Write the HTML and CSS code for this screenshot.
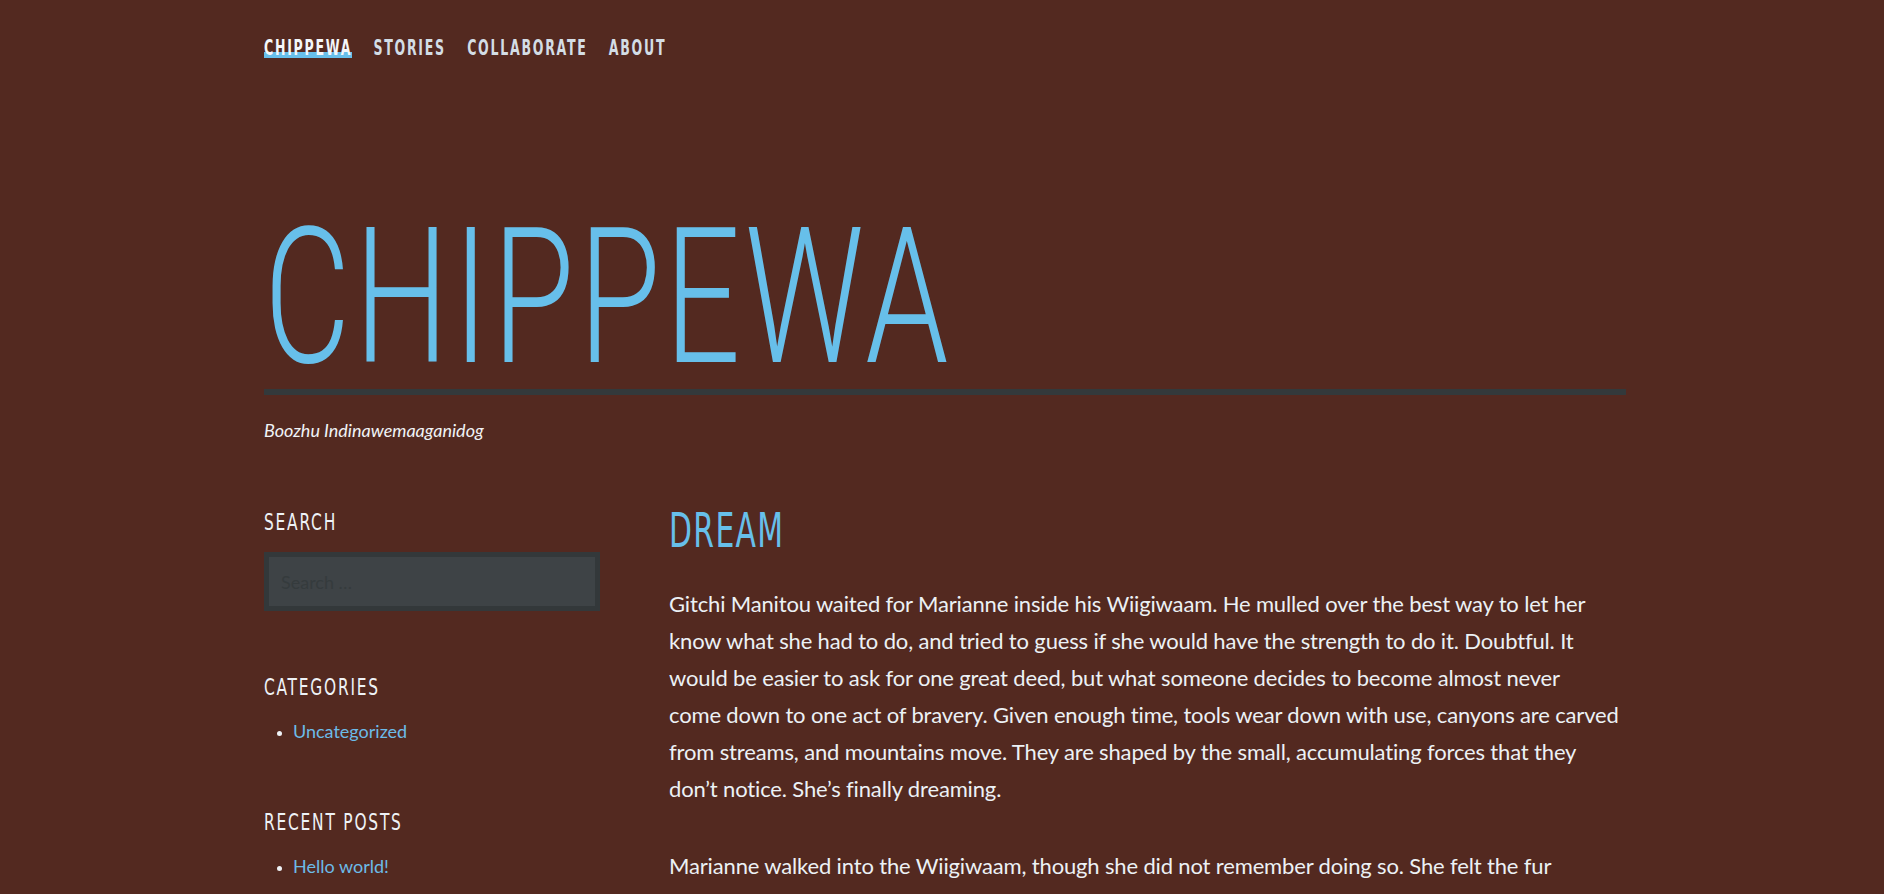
FILE: index.html
```html
<!DOCTYPE html>
<html lang="en">
<head>
<meta charset="utf-8">
<title>Chippewa</title>
<link rel="stylesheet" href="styles.css">
</head>
<body>
<div class="page">
  <nav class="nav">
    <a class="nav-link current" href="#">Chippewa</a>
    <a class="nav-link" href="#">Stories</a>
    <a class="nav-link" href="#">Collaborate</a>
    <a class="nav-link" href="#">About</a>
  </nav>
  <header class="masthead">
    <h1 class="site-title"><span class="site-title-text">CHIPPEWA</span></h1>
    <div class="rule"></div>
    <p class="tagline">Boozhu Indinawemaaganidog</p>
  </header>
  <div class="columns">
    <aside class="sidebar">
      <section class="widget">
        <h2 class="widget-title"><span class="condensed">Search</span></h2>
        <input class="search-field" type="search" placeholder="Search …">
      </section>
      <section class="widget">
        <h2 class="widget-title"><span class="condensed">Categories</span></h2>
        <ul class="widget-list"><li><a href="#">Uncategorized</a></li></ul>
      </section>
      <section class="widget">
        <h2 class="widget-title"><span class="condensed">Recent Posts</span></h2>
        <ul class="widget-list"><li><a href="#">Hello world!</a></li></ul>
      </section>
    </aside>
    <main class="content">
      <h2 class="entry-title"><span class="condensed">Dream</span></h2>
      <p class="entry-text">Gitchi Manitou waited for Marianne inside his Wiigiwaam. He mulled over the best way to let her<br>know what she had to do, and tried to guess if she would have the strength to do it. Doubtful. It<br>would be easier to ask for one great deed, but what someone decides to become almost never<br>come down to one act of bravery. Given enough time, tools wear down with use, canyons are carved<br>from streams, and mountains move. They are shaped by the small, accumulating forces that they<br>don’t notice. She’s finally dreaming.</p>
      <p class="entry-text">Marianne walked into the Wiigiwaam, though she did not remember doing so. She felt the fur<br>of the bear beneath her and saw the glow of the fire across the lodge, where Gitchi Manitou sat.</p>
    </main>
  </div>
</div>
</body>
</html>
```

FILE: styles.css
```css
* { box-sizing: border-box; }
html, body { margin: 0; padding: 0; }
body {
  background: #532920;
  color: #e6edf2;
  font-family: Lato, "Open Sans", sans-serif;
  height: 894px;
  overflow: hidden;
}
.page {
  padding: 0 258px 0 264px;
}
.nav {
  display: flex;
  gap: 32px;
  padding-top: 39px;
  transform: scaleX(0.665);
  transform-origin: left center;
}
.nav-link {
  font-family: "DejaVu Sans Condensed", "DejaVu Sans", sans-serif;
  font-weight: 700;
  font-size: 21px;
  line-height: 18px;
  letter-spacing: 2.6px;
  text-transform: uppercase;
  color: #d3dde5;
  text-decoration: none;
}
.nav-link.current {
  color: #f4f7fa;
  box-shadow: inset 0 -6px 0 #67bfea;
  padding-bottom: 1px;
}
.site-title {
  margin: 0;
  margin-top: 149px;
  font-family: Roboto, sans-serif;
  font-weight: 300;
  font-size: 190px;
  line-height: 180px;
  color: #67bfea;
}
.site-title-text {
  display: inline-block;
  transform: scaleX(0.70);
  transform-origin: left center;
  letter-spacing: 6px;
}
.rule {
  height: 6px;
  background: #33393b;
  margin-top: 2px;
}
.tagline {
  margin: 23px 0 0;
  font-family: Lato, sans-serif;
  font-style: italic;
  font-size: 18px;
  line-height: 24px;
  color: #f0f3f6;
}
.columns {
  display: flex;
  gap: 69px;
  margin-top: 58px;
}
.sidebar {
  width: 336px;
  flex: none;
  padding-top: 7px;
}
.widget + .widget { margin-top: 61px; }
.widget:last-child { margin-top: 63px; }
.condensed {
  display: inline-block;
  transform-origin: left center;
}
.widget-title {
  margin: 0;
  font-family: "DejaVu Sans Condensed", "DejaVu Sans", sans-serif;
  font-weight: 400;
  font-size: 23px;
  line-height: 30px;
  letter-spacing: 2.4px;
  text-transform: uppercase;
  color: #eef2f6;
}
.widget-title .condensed { transform: scaleX(0.745); }
.search-field {
  display: block;
  width: 336px;
  height: 59px;
  margin-top: 15px;
  background: #3e4346;
  border: 5px solid #33383a;
  padding: 0 12px;
  font-family: Lato, sans-serif;
  font-size: 18px;
  color: #e6edf2;
  outline: none;
}
.search-field::placeholder { color: #353b3d; }
.widget-list {
  margin: 16px 0 0;
  padding-left: 29px;
  list-style: disc;
  font-size: 18px;
  line-height: 26px;
}
.widget-list li::marker { color: #eef2f6; font-size: 14px; }
.widget-list a { color: #6cbbe8; text-decoration: none; }
.content {
  flex: 1;
  min-width: 0;
}
.entry-title {
  margin: 0;
  font-family: "DejaVu Sans Condensed", "DejaVu Sans", sans-serif;
  font-weight: 400;
  font-size: 48px;
  line-height: 60px;
  letter-spacing: 2px;
  text-transform: uppercase;
  color: #67bfea;
}
.entry-title .condensed { transform: scaleX(0.69); }
.entry-text {
  margin: 25px 0 0;
  font-size: 22px;
  line-height: 37px;
  letter-spacing: -0.15px;
  white-space: nowrap;
  color: #ecf1f5;
}
.entry-text + .entry-text { margin-top: 40px; }
```
